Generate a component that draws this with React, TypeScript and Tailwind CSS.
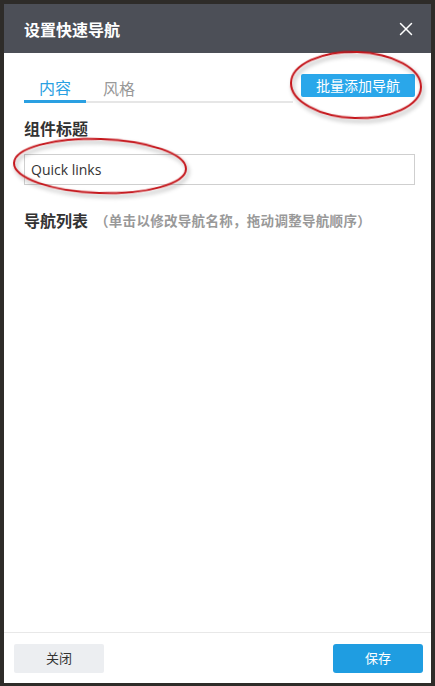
import { X } from "lucide-react";

const CJK = "font-['Microsoft_YaHei','Noto_Sans_CJK_SC',sans-serif]";

function Annotations() {
  return (
    <svg
      className="pointer-events-none absolute left-0 top-0"
      width={435}
      height={686}
      viewBox="0 0 435 686"
    >
      <defs>
        <filter id="shadow" x="-20%" y="-30%" width="140%" height="160%">
          <feDropShadow dx="2" dy="3" stdDeviation="2" floodColor="#000" floodOpacity="0.35" />
        </filter>
      </defs>
      <ellipse
        cx={356}
        cy={85}
        rx={65}
        ry={33}
        fill="none"
        stroke="#c4141a"
        strokeWidth={2}
        filter="url(#shadow)"
        transform="rotate(2 356 85)"
      />
      <ellipse
        cx={100}
        cy={166}
        rx={86}
        ry={27}
        fill="none"
        stroke="#c4141a"
        strokeWidth={2}
        filter="url(#shadow)"
        transform="rotate(2 100 166)"
      />
    </svg>
  );
}

export default function App() {
  return (
    <div className={`relative h-[686px] w-[435px] overflow-hidden bg-[#2e2c29] pb-[3px] pl-[4px] pr-[4px] pt-[4px] ${CJK}`}>
      <div className="flex h-full flex-col bg-white">
        <header className="flex h-[49px] shrink-0 items-center justify-between bg-[#4c4f57] pl-[20px] pr-[14px]">
          <h1 className="text-[16px] font-bold text-white">设置快速导航</h1>
          <X size={22} strokeWidth={1.6} className="text-white" />
        </header>

        <main className="flex-1 pl-[20px] pr-[16px] pt-[21px]">
          <div className="flex items-start">
            <div className="flex h-[29px] w-[269px] border-b-2 border-[#e6e6e6]">
              <div className="-mb-[2px] flex w-[62px] items-center justify-center border-b-[3px] border-[#2aa0e2] text-[16px] text-[#2aa0e2]">
                内容
              </div>
              <div className="flex w-[66px] items-center justify-center text-[16px] text-[#999]">
                风格
              </div>
            </div>
            <button className="ml-auto flex h-[23px] w-[114px] items-center justify-center rounded-[2px] bg-[#2aa7ea] text-[14px] text-white">
              批量添加导航
            </button>
          </div>

          <div className="mt-[15px] text-[16px] font-bold leading-[20px] text-[#333]">组件标题</div>
          <div className="mt-[16px] flex h-[31px] items-center border border-[#cfcfcf] px-[6px] font-['Open_Sans',sans-serif] text-[14px] text-[#333]">
            Quick links
          </div>

          <div className="mt-[25px] flex items-center leading-[20px]">
            <span className="text-[16px] font-bold text-[#333]">导航列表</span>
            <span className="ml-[7px] text-[13.5px] font-bold tracking-[0.3px] text-[#999]">（单击以修改导航名称，拖动调整导航顺序）</span>
          </div>
        </main>

        <footer className="flex h-[51px] shrink-0 items-center justify-between border-t border-[#e8e8e8] pl-[10px] pr-[8px]">
          <button className="flex h-[29px] w-[90px] items-center justify-center rounded-[2px] bg-[#eceef1] text-[13px] text-[#333]">
            关闭
          </button>
          <button className="flex h-[29px] w-[90px] items-center justify-center rounded-[3px] bg-[#1f9de1] text-[13px] text-white">
            保存
          </button>
        </footer>
      </div>
      <Annotations />
    </div>
  );
}
